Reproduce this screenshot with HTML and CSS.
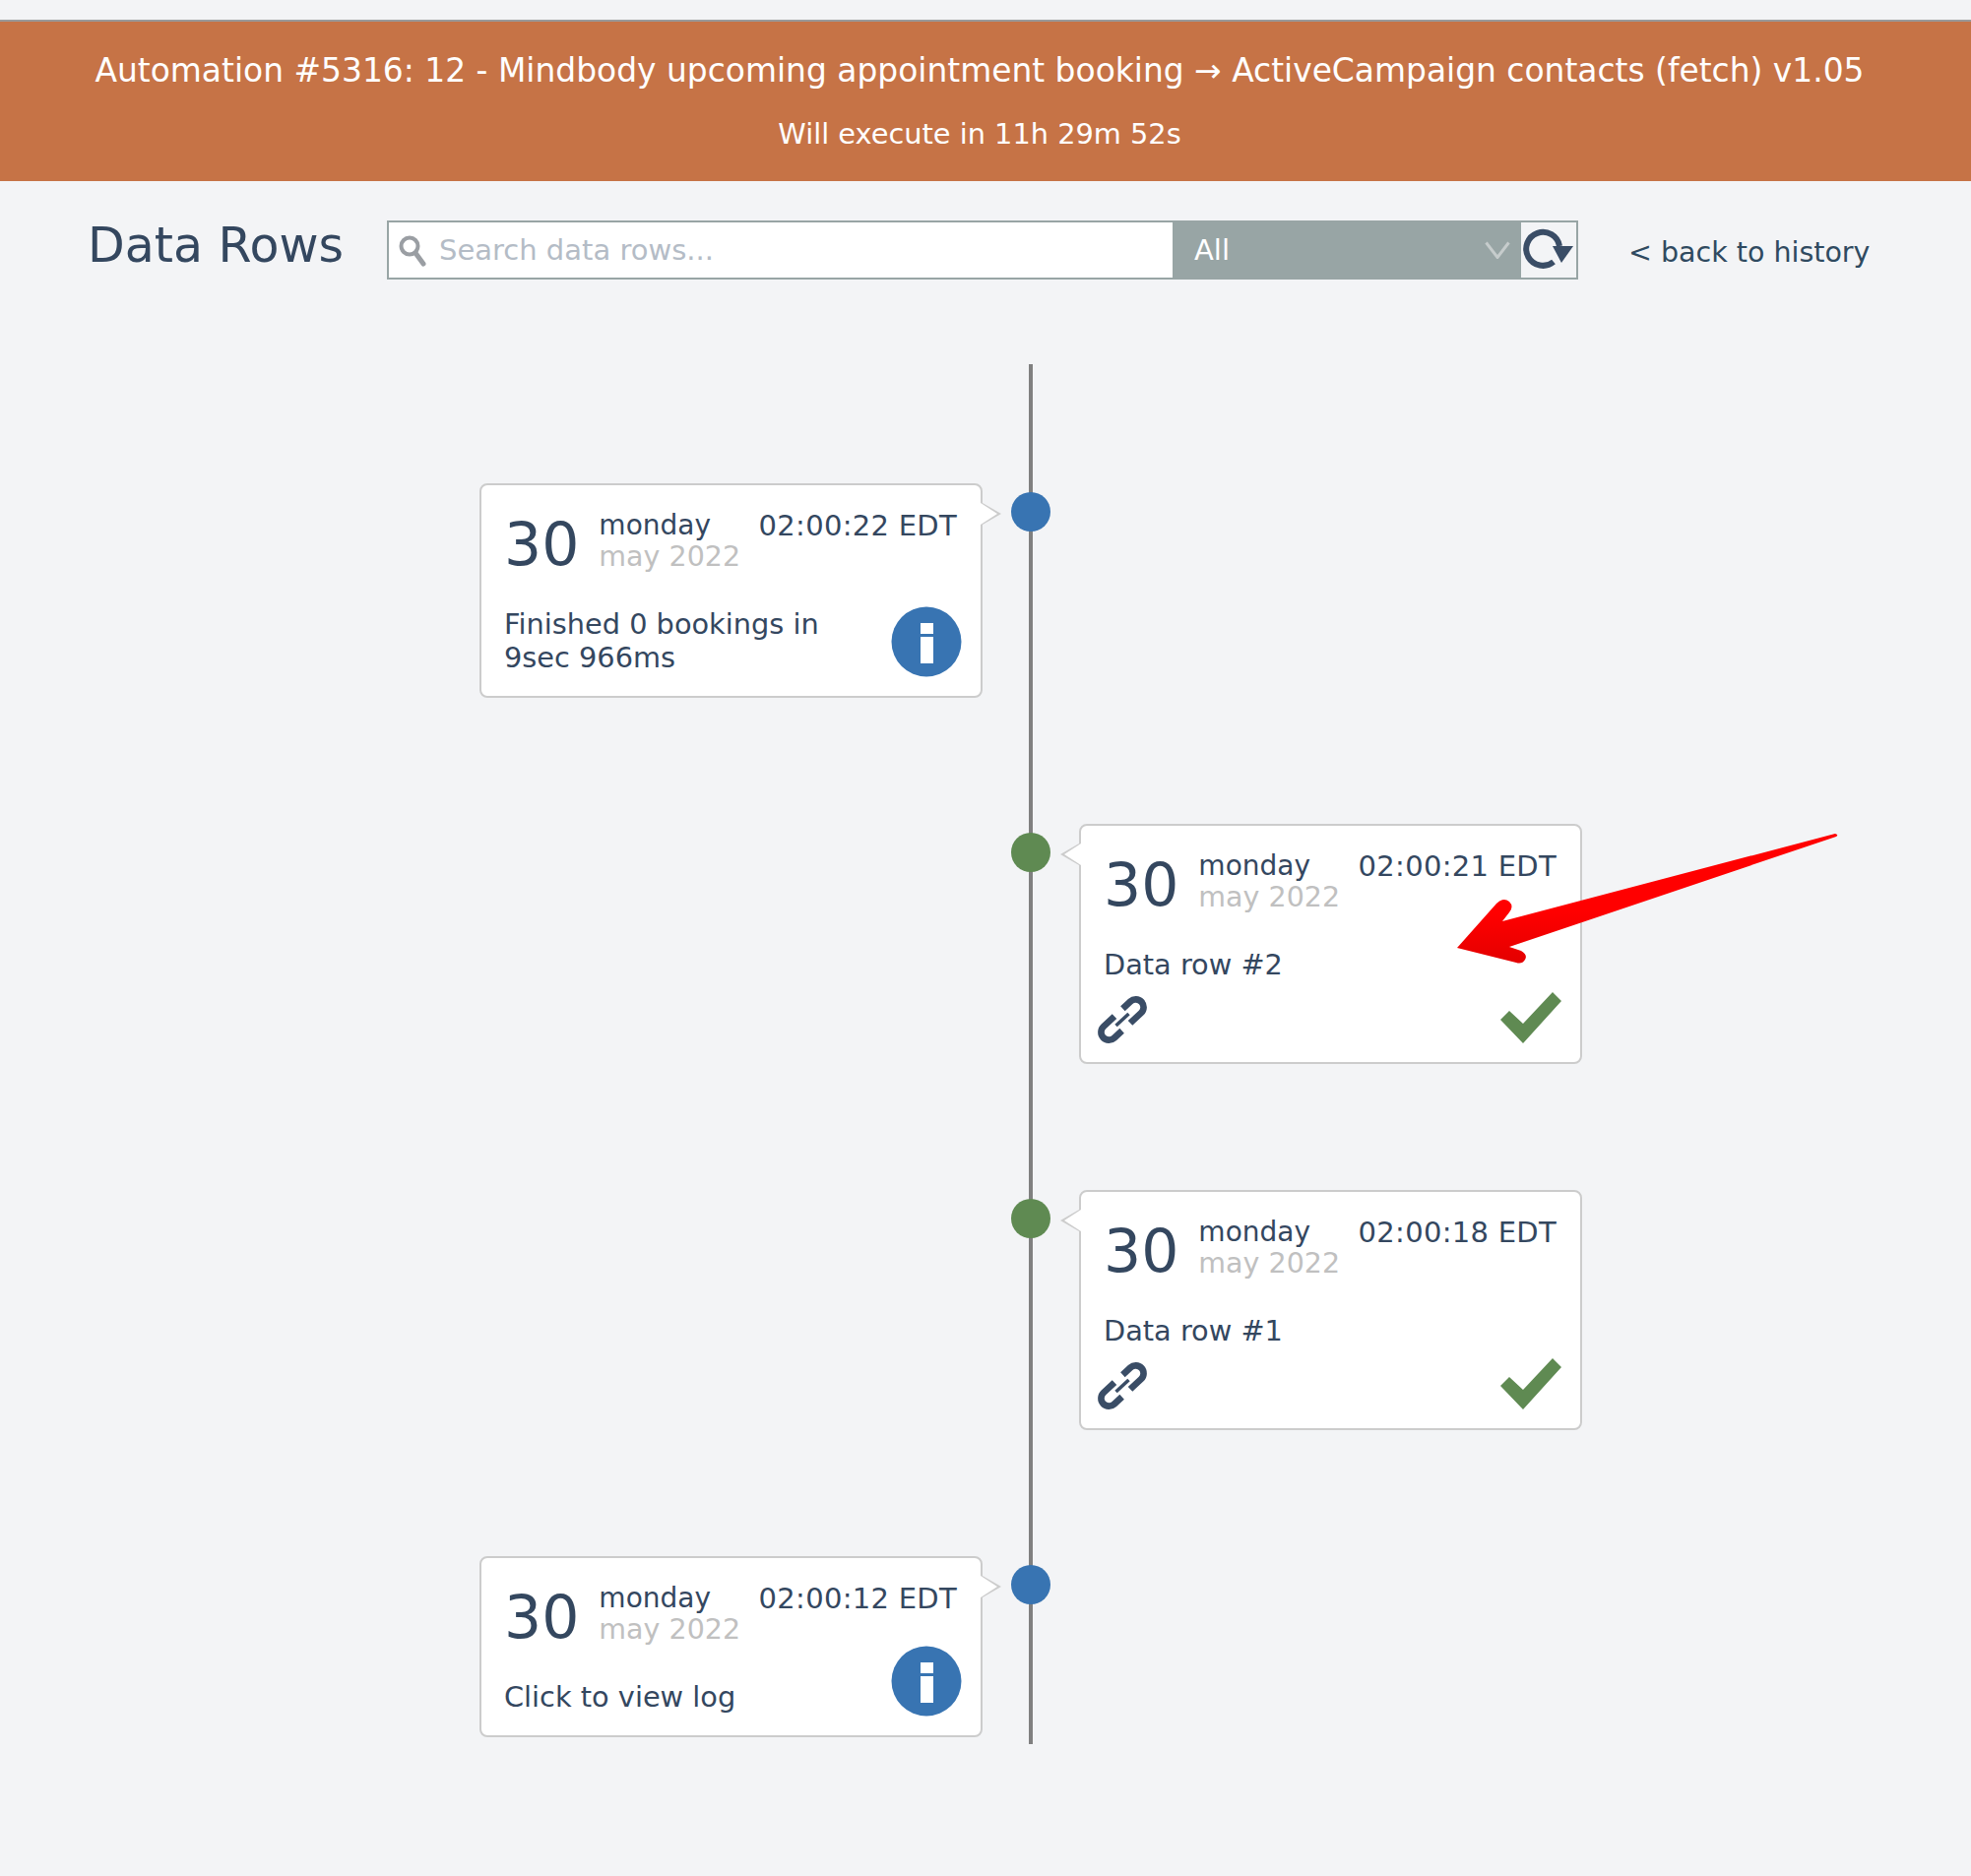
FILE: index.html
```html
<!DOCTYPE html>
<html lang="en">
<head>
    <meta charset="UTF-8">
    <meta name="viewport" content="width=device-width, initial-scale=1.0">
    <title>Data Rows</title>
    <link rel="stylesheet" href="styles.css">
</head>
<body>
    <!-- Banner -->
    <div class="banner">
        <div class="banner-title">Automation #5316: 12 - Mindbody upcoming appointment booking → ActiveCampaign contacts (fetch) v1.05</div>
        <div class="banner-sub">Will execute in 11h 29m 52s</div>
    </div>

    <!-- Toolbar -->
    <div class="toolbar">
        <h2 class="page-title">Data Rows</h2>
        <div class="filter">
            <div class="search">
                <svg class="search-icon" viewBox="0 0 30 34" width="30" height="34"><circle cx="12" cy="12" r="8.5" fill="none" stroke="#9a9ea3" stroke-width="4"/><path d="M18 19l8 11" stroke="#9a9ea3" stroke-width="5" stroke-linecap="round"/></svg>
                <span class="placeholder">Search data rows...</span>
            </div>
            <div class="select">
                <span>All</span>
                <svg viewBox="0 0 26 18" width="26" height="18"><path d="M1.5 1.5L13 16.5 24.5 1.5" fill="none" stroke="#c6cccc" stroke-width="3"/></svg>
            </div>
            <div class="refresh">
                <svg viewBox="0 0 55 56" width="55" height="56"><path d="M38 24A17 17 0 1 0 32 40" fill="none" stroke="#3a4d66" stroke-width="6"/><path d="M31 24H52L40 41z" fill="#3a4d66"/></svg>
            </div>
        </div>
        <a class="back-link" href="#">&lt; back to history</a>
    </div>

    <!-- Timeline -->
    <div class="timeline">
        <div class="row">
            <div class="card card-left">
                <div class="card-head">
                    <div class="day">30</div>
                    <div class="date"><div>monday</div><div class="month">may 2022</div></div>
                    <div class="time">02:00:22 EDT</div>
                </div>
                <div class="card-body">
                    <div class="msg">Finished 0 bookings in<br>9sec 966ms</div>
                    <svg class="info-icon" viewBox="0 0 72 72" width="72" height="72"><circle cx="36" cy="36" r="35.500" fill="#3874b2"/><rect x="30" y="17" width="13" height="11" fill="#fff"/><rect x="30" y="31" width="13" height="27" fill="#fff"/></svg>
                </div>
            </div>
            <div class="dot dot-blue"></div>
        </div>

        <div class="row">
            <div class="dot dot-green"></div>
            <div class="card card-right">
                <div class="card-head">
                    <div class="day">30</div>
                    <div class="date"><div>monday</div><div class="month">may 2022</div></div>
                    <div class="time">02:00:21 EDT</div>
                </div>
                <div class="msg">Data row #2</div>
                <div class="card-icons">
                    <svg class="link-icon" viewBox="0 0 70 70" width="62" height="62"><g transform="rotate(-43 35 35)" fill="none" stroke="#3a4d66"><path d="M31 26H14a9 9 0 0 0 0 18H26" stroke-width="7.500"/><path d="M39 44H56a9 9 0 0 0 0-18H44" stroke-width="7.500"/><path d="M25 35H45" stroke-width="4"/></g></svg>
                    <svg class="check-icon" viewBox="0 0 62 52" width="62" height="52"><path d="M0 28L9 19 23 32 53 0 62 9 23 52z" fill="#5f8a52"/></svg>
                </div>
            </div>
        </div>

        <div class="row">
            <div class="dot dot-green"></div>
            <div class="card card-right">
                <div class="card-head">
                    <div class="day">30</div>
                    <div class="date"><div>monday</div><div class="month">may 2022</div></div>
                    <div class="time">02:00:18 EDT</div>
                </div>
                <div class="msg">Data row #1</div>
                <div class="card-icons">
                    <svg class="link-icon" viewBox="0 0 70 70" width="62" height="62"><g transform="rotate(-43 35 35)" fill="none" stroke="#3a4d66"><path d="M31 26H14a9 9 0 0 0 0 18H26" stroke-width="7.500"/><path d="M39 44H56a9 9 0 0 0 0-18H44" stroke-width="7.500"/><path d="M25 35H45" stroke-width="4"/></g></svg>
                    <svg class="check-icon" viewBox="0 0 62 52" width="62" height="52"><path d="M0 28L9 19 23 32 53 0 62 9 23 52z" fill="#5f8a52"/></svg>
                </div>
            </div>
        </div>

        <div class="row">
            <div class="card card-left">
                <div class="card-head">
                    <div class="day">30</div>
                    <div class="date"><div>monday</div><div class="month">may 2022</div></div>
                    <div class="time">02:00:12 EDT</div>
                </div>
                <div class="card-body">
                    <div class="msg">Click to view log</div>
                    <svg class="info-icon" viewBox="0 0 72 72" width="72" height="72"><circle cx="36" cy="36" r="35.500" fill="#3874b2"/><rect x="30" y="17" width="13" height="11" fill="#fff"/><rect x="30" y="31" width="13" height="27" fill="#fff"/></svg>
                </div>
            </div>
            <div class="dot dot-blue"></div>
        </div>
    </div>

    <!-- Annotation arrow drawn over the page -->
    <svg class="arrow" viewBox="0 0 400 145" width="400" height="145">
        <defs>
            <linearGradient id="arrowFill" x1="0.3" y1="0.2" x2="0.36" y2="1">
                <stop offset="0.5" stop-color="#ff0000"/>
                <stop offset="1" stop-color="#e20000"/>
            </linearGradient>
        </defs>
        <path d="M10 123L50 78Q57 71 63 76Q68 81 63 87L56 96L394 7Q398 8 395 10L63 122L75 126Q82 130 79 135Q76 140 70 138Z" fill="url(#arrowFill)"/>
    </svg>
</body>
</html>
```

FILE: styles.css
```css
body {
    font-family: 'DejaVu Sans', Verdana, sans-serif;
    background-color: #f3f4f6;
    color: #34475f;
    margin: 0;
    padding: 20px 0 0;
    position: relative;
    min-height: 1886px;
}

.banner {
    background-color: #c67346;
    border-top: 2px solid #999;
    color: white;
    text-align: center;
    height: 164px;
    box-sizing: border-box;
    padding: 30px 12px 0 0;
}
.banner-title {
    font-size: 32.900px;
    line-height: 40px;
}
.banner-sub {
    font-size: 28.800px;
    line-height: 36px;
    margin-top: 26px;
}

.toolbar {
    display: flex;
    align-items: center;
    padding: 40px 0 0 89px;
}
.page-title {
    font-size: 49px;
    font-weight: normal;
    line-height: 60px;
    width: 304px;
    margin: -9px 0 0;
    white-space: nowrap;
}
.filter {
    display: flex;
    width: 1210px;
    height: 60px;
    box-sizing: border-box;
    border: 2px solid #98a5a5;
    font-size: 29px;
}
.search {
    width: 796px;
    background: white;
    display: flex;
    align-items: center;
}
.search-icon {
    margin: 2px 12px 0 9px;
}
.placeholder {
    color: #b4bcc6;
}
.select {
    width: 354px;
    background-color: #98a5a5;
    color: white;
    display: flex;
    align-items: center;
    justify-content: space-between;
    padding: 0 11px 0 22px;
    box-sizing: border-box;
}
.refresh {
    flex: 1;
    background-color: #f3f4f6;
    display: flex;
    align-items: center;
    justify-content: center;
}
.back-link {
    color: #2f4a60;
    font-size: 28.500px;
    text-decoration: none;
    margin: 4px 0 0 51px;
    white-space: nowrap;
}

.timeline {
    position: relative;
    width: 1120px;
    margin: 86px 0 0 487px;
    padding: 121px 0 7px;
    display: flex;
    flex-direction: column;
    gap: 128px;
}
.timeline::before {
    content: "";
    position: absolute;
    left: 558px;
    top: 0;
    bottom: 0;
    width: 4px;
    background-color: #808080;
}

.row {
    display: grid;
    grid-template-columns: 511px 98px 511px;
    position: relative;
}
.dot {
    grid-column: 2;
    grid-row: 1;
    width: 40px;
    height: 40px;
    border-radius: 50%;
    justify-self: center;
    margin-top: 9px;
}
.dot-blue {
    background-color: #3874b2;
}
.dot-green {
    background-color: #5f8a52;
}

.card {
    grid-row: 1;
    background: white;
    border: 2px solid #ccc;
    border-radius: 8px;
    box-sizing: border-box;
    padding: 20px 24px 19px 23px;
    position: relative;
}
.card-left {
    grid-column: 1;
}
.card-right {
    grid-column: 3;
}
/* little tip pointing at the dot */
.card::before,
.card::after {
    content: "";
    position: absolute;
    top: 18px;
    border-style: solid;
    border-color: transparent;
    border-width: 11px 0;
}
.card-left::before {
    right: -21px;
    border-left: 19px solid #ccc;
}
.card-left::after {
    right: -17px;
    border-left: 17px solid white;
}
.card-right::before {
    left: -21px;
    border-right: 19px solid #ccc;
}
.card-right::after {
    left: -17px;
    border-right: 17px solid white;
}

.card-head {
    display: flex;
    font-size: 28px;
    line-height: 32px;
}
.day {
    font-size: 60px;
    line-height: 70px;
    margin: 5px 20px 0 0;
}
.date {
    padding-top: 5px;
}
.month {
    font-size: 28.500px;
    color: #c0c0c0;
}
.time {
    font-size: 29px;
    letter-spacing: 0.3px;
    margin-left: auto;
    padding-top: 5px;
}
.card-body {
    display: flex;
    justify-content: space-between;
    align-items: flex-end;
}
.msg {
    font-size: 28.800px;
    line-height: 34px;
    margin: 29px 0 3px;
    white-space: nowrap;
}
.info-icon {
    margin-top: -40px;
    margin-right: -5px;
    flex-shrink: 0;
}
.card-icons {
    display: flex;
    justify-content: space-between;
    align-items: flex-end;
    margin-top: 11px;
}
.link-icon {
    margin: -7px 0 -7px -12px;
}
.check-icon {
    margin-right: -5px;
}

.arrow {
    position: absolute;
    left: 1470px;
    top: 840px;
}
```
